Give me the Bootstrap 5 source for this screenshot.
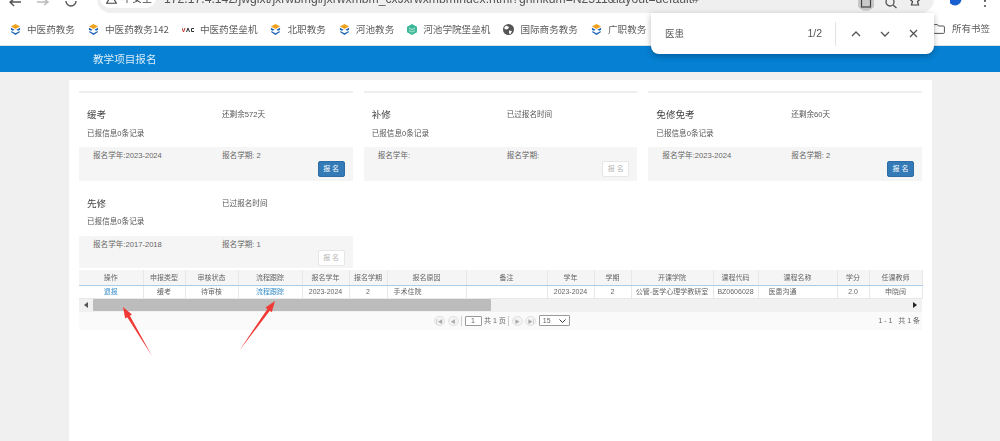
<!DOCTYPE html>
<html lang="zh">
<head>
<meta charset="utf-8">
<title>教学项目报名</title>
<link rel="stylesheet" href="https://cdn.jsdelivr.net/npm/bootstrap@5.3.0/dist/css/bootstrap.min.css">
<style>
html,body{height:441px;overflow:hidden}
body{background:#f0f0f0;font-family:"Liberation Sans","Noto Sans CJK SC",sans-serif;color:#555;position:relative;font-size:8px;line-height:1;filter:blur(.35px)}
.toolbar{height:13px;background:#fff;overflow:hidden}
.navico{width:97px;padding-left:9px;gap:16px;height:13px}
.addr{width:837px;height:26px;background:#efefef;border-radius:0 0 14px 14px;margin-top:-13px;flex:none}
.unsafe{background:#fff;width:56px;height:21px;border-radius:11px;margin:0 8px 0 3px;font-size:10px;line-height:1;color:#444;padding-top:7px;padding-left:6px;flex:none;gap:5px}
.urltext{font-size:12.2px;line-height:1;color:#555;padding-top:6px;white-space:nowrap;flex:1;overflow:hidden}
.addrico{gap:11px;flex:none;padding:4px 13px 0 0}
.marks{height:33px;background:#fff;border-bottom:1px solid #dfe3e6;padding:1px 0 0 10px;font:9.6px/1 "Noto Sans CJK SC",sans-serif;color:#5c5c5c}
.mark-item{gap:6px;flex:none;margin-right:13px;white-space:nowrap}
.allmarks{position:absolute;left:933px;top:24px;gap:7px;font:9.5px/1 "Noto Sans CJK SC",sans-serif;color:#5c5c5c;white-space:nowrap}
.topbar{height:26px;background:#0580d2;padding-left:93px;color:#d9ecf9;font:10.6px/1 "Noto Sans CJK SC",sans-serif}
.sheet{width:863px;margin:8px 0 0 69px;height:361px;background:#fff;padding:11px 10px 0}
.cardgrid{grid-template-columns:repeat(3,1fr);gap:0 11px}
.tile{border-top:2px solid #eee}
.tile-head{padding:17px 8px 0 8px;height:54px}
.tile-head .nm{font:9.6px/1 "Noto Sans CJK SC",sans-serif;color:#444;width:135px}
.tile-head .left{font:7.6px/1 "Liberation Sans","Noto Sans CJK SC",sans-serif;color:#555}
.tile-sub{font:7.6px/1 "Liberation Sans","Noto Sans CJK SC",sans-serif;color:#555;margin-top:10px}
.tile-foot{height:34px;background:#f5f5f5;padding:5px 8px 0 14px;font:7.6px/1 "Liberation Sans","Noto Sans CJK SC",sans-serif;color:#666;position:relative}
.tile-foot .y{width:129px}
.actbtn{position:absolute;right:8px;top:14px;width:27px;height:16px;padding:0;border-radius:2px;font-size:7px;line-height:14px;--bs-btn-font-size:7px}
.btn-on{background:#337ab7;border:1px solid #2e6da4;color:#fff}
.btn-off{background:#fff;border:1px solid #e6e6e6;color:#b5b5b5}
.tile-low{border-top:0}
.tile-low .tile-head{padding-top:18px;height:55px}
.tile-low .tile-sub{margin-top:9px}
.tile-low .tile-foot{height:32px}
.gridwrap{margin-top:2px;width:843px;font:7px/1 "Liberation Sans","Noto Sans CJK SC",sans-serif}
.gridtbl{table-layout:fixed;width:843px;margin:0;border-collapse:collapse;--bs-table-bg:transparent;font-size:7px;line-height:1;color:#666}
.gridtbl th,.gridtbl td{padding:0;text-align:center;font-weight:400;border:0;border-right:1px solid #e8e8e8;white-space:nowrap;overflow:hidden;vertical-align:middle}
.gridtbl th{height:15px;background:#f5f5f5;color:#666;border-bottom:1px solid #a9cdea}
.gridtbl td{height:13px;background:#fff;border-bottom:1px solid #e8e8e8}
.gridtbl .lft{text-align:left;padding-left:6px}
.gridtbl .lft-wide{padding-left:10px}
.gridtbl a{color:#3a8fc9;text-decoration:none}
.hscroll{height:13px;background:#f1f1f1}
.hscroll .thumb{width:398px;height:12px;background:#bcbcbc}
.arr{width:14px;height:13px;flex:none}
.pager{height:18px;background:#fafafa;padding-right:2px;color:#666;font:7px/1 "Liberation Sans","Noto Sans CJK SC",sans-serif}
.pager-mid{margin-left:355px;gap:2.500px}
.pgb{width:11px;height:10px;border:1px solid #e3e3e3;border-radius:5px;color:#aaa;font-size:5px;line-height:8px;text-align:center;background:#f3f3f3}
.pgsep{width:1px;height:10px;background:#ccc}
.pginp{width:17px;height:10px;border:1px solid #999;background:#fff;text-align:center;line-height:8px;border-radius:1px}
.pgsel{width:31px;height:11px;border:1px solid #999;background:#fff;border-radius:1px;padding:0 3px}
.findbar{position:absolute;left:651px;top:13px;width:283px;height:41px;background:#fff;border-radius:0 0 8px 8px;box-shadow:0 2px 6px rgba(0,0,0,.28);padding:0 16px 0 14px;font:9.5px/1 "Noto Sans CJK SC",sans-serif;color:#555}
.findbar .cnt{font:10.5px/1 "Liberation Sans",sans-serif;margin-left:auto;margin-right:13px}
.findbar .sep{width:1px;height:24px;background:#e2e2e2;margin-right:15px}
.findbar .ctl{gap:19px}
.arrows{position:absolute;left:0;top:0;pointer-events:none}
</style>
</head>
<body>
<svg width="0" height="0" class="position-absolute">
  <defs>
    <symbol id="cube" viewBox="0 0 12 12">
      <path d="M6 0 11 2.600 6 5.400 1 2.600z" fill="#f0a21e"/>
      <path d="M1 4.200 5 6.400 3.200 7.400 1 6.200zM11 4.200 7 6.400 8.800 7.400 11 6.200z" fill="#1b62b8"/>
      <path d="M1.400 7.600 6 10 10.600 7.600 10.600 9 6 12 1.400 9z" fill="#1b62b8"/>
    </symbol>
  </defs>
</svg>

<div class="toolbar d-flex align-items-start">
  <div class="navico d-flex align-items-start">
    <svg width="12" height="8" viewBox="0 0 12 8"><path d="M12 1H2M5 -2 1 1l4 4" transform="translate(0 1)" fill="none" stroke="#555" stroke-width="1.400"/></svg>
    <svg width="12" height="8" viewBox="0 0 12 8"><path d="M0 2h10M7 -1l4 3-4 3" fill="none" stroke="#bbb" stroke-width="1.400"/></svg>
    <svg width="12" height="8" viewBox="0 0 12 8"><path d="M11 0A5 5 0 0 1 1 0" fill="none" stroke="#555" stroke-width="1.400" transform="translate(0 1)"/></svg>
  </div>
  <div class="addr d-flex">
    <div class="unsafe d-flex align-items-start"><svg class="flex-none" width="11" height="10" viewBox="0 0 11 10"><path d="M5.500 .8 10.300 9.200H.7z" fill="none" stroke="#444" stroke-width="1.100"/></svg><span>不安全</span></div>
    <div class="urltext">172.17.4.142/jwglxt/jxrwbmgl/jxrwxmbm_cxJxrwxmbmIndex.html?gnmkdm=N2511&amp;layout=default#</div>
    <div class="addrico d-flex align-items-start">
      <svg width="16" height="20" viewBox="0 0 16 20"><circle cx="8" cy="11" r="9" fill="#c9c9c9"/><rect x="3.500" y="7" width="9" height="9" fill="none" stroke="#444" stroke-width="1.200"/></svg>
      <svg width="13" height="20" viewBox="0 0 13 20"><circle cx="5" cy="11" r="4" fill="none" stroke="#555" stroke-width="1.300"/><path d="M8 14l3.500 3" stroke="#555" stroke-width="1.400"/></svg>
      <svg width="12" height="20" viewBox="0 0 12 20"><path d="M6 10 7.500 13.500 11.500 14 8.500 16.500 9.500 20H2.500L3.500 16.500.5 14l4-.5z" transform="translate(0 -6)" fill="none" stroke="#444" stroke-width="1.200"/></svg>
    </div>
  </div>
  <svg class="ms-3 flex-none" width="14" height="12" viewBox="0 0 14 12"><circle cx="5" cy="-1" r="6.500" fill="#1a5fd0"/></svg>
  <svg class="flex-none" style="margin-left:19px" width="4" height="13" viewBox="0 0 4 13"><circle cx="2" cy="1" r="1.100" fill="#555"/><circle cx="2" cy="6" r="1.100" fill="#555"/></svg>
</div>

<div class="marks d-flex align-items-center">
  <div class="mark-item d-flex align-items-center"><svg width="11" height="11"><use href="#cube"/></svg>中医药教务</div>
  <div class="mark-item d-flex align-items-center"><svg width="11" height="11"><use href="#cube"/></svg>中医药教务142</div>
  <div class="mark-item d-flex align-items-center"><svg width="12" height="6" viewBox="0 0 12 6"><path d="M0 1 1.500 5 3 1" fill="none" stroke="#c0392b" stroke-width="1"/><path d="M4.500 5 6 1 7.500 5" fill="none" stroke="#333" stroke-width="1"/><path d="M12 1.500H9.500V4.500H12" fill="none" stroke="#333" stroke-width="1"/></svg>中医药堡垒机</div>
  <div class="mark-item d-flex align-items-center"><svg width="11" height="11"><use href="#cube"/></svg>北职教务</div>
  <div class="mark-item d-flex align-items-center"><svg width="11" height="11"><use href="#cube"/></svg>河池教务</div>
  <div class="mark-item d-flex align-items-center"><svg width="10" height="11" viewBox="0 0 10 11"><path d="M5 0 10 2.700V8.300L5 11 0 8.300V2.700z" fill="#3fb89a"/><path d="M2 4l3 1.600L8 4M2 6.500l3 1.600 3-1.600" fill="none" stroke="#d6f3ea" stroke-width=".8"/></svg>河池学院堡垒机</div>
  <div class="mark-item d-flex align-items-center"><svg width="11" height="11" viewBox="0 0 11 11"><circle cx="5.500" cy="5.500" r="5.500" fill="#555"/><path d="M3 1.500 6 3 5 5 2.500 5.500 1 4zM6 6.500l3 .5-1.500 3-1.500-.5z" fill="#fff"/></svg>国际商务教务</div>
  <div class="mark-item d-flex align-items-center"><svg width="11" height="11"><use href="#cube"/></svg>广职教务</div>
</div>
<div class="allmarks d-flex align-items-center"><svg width="12" height="10" viewBox="0 0 12 10"><path d="M.6 1.500A1 1 0 0 1 1.500.6H4.500L5.500 2H10.500A1 1 0 0 1 11.400 3V8.500A1 1 0 0 1 10.500 9.400H1.500A1 1 0 0 1 .6 8.500z" fill="none" stroke="#555" stroke-width="1"/></svg>所有书签</div>

<div class="topbar d-flex align-items-center">教学项目报名</div>

<main class="sheet">
  <div class="cardgrid d-grid">
    <section class="tile">
      <div class="tile-head"><div class="d-flex align-items-center"><div class="nm">缓考</div><div class="left">还剩余572天</div></div><div class="tile-sub">已报信息0条记录</div></div>
      <div class="tile-foot d-flex"><div class="y">报名学年:2023-2024</div><div>报名学期: 2</div><button class="btn actbtn btn-on" type="button">报 名</button></div>
    </section>
    <section class="tile">
      <div class="tile-head"><div class="d-flex align-items-center"><div class="nm">补修</div><div class="left">已过报名时间</div></div><div class="tile-sub">已报信息0条记录</div></div>
      <div class="tile-foot d-flex"><div class="y">报名学年:</div><div>报名学期:</div><button class="btn actbtn btn-off" type="button">报 名</button></div>
    </section>
    <section class="tile">
      <div class="tile-head"><div class="d-flex align-items-center"><div class="nm">免修免考</div><div class="left">还剩余60天</div></div><div class="tile-sub">已报信息0条记录</div></div>
      <div class="tile-foot d-flex"><div class="y">报名学年:2023-2024</div><div>报名学期: 2</div><button class="btn actbtn btn-on" type="button">报 名</button></div>
    </section>
    <section class="tile tile-low">
      <div class="tile-head"><div class="d-flex align-items-center"><div class="nm">先修</div><div class="left">已过报名时间</div></div><div class="tile-sub">已报信息0条记录</div></div>
      <div class="tile-foot d-flex"><div class="y">报名学年:2017-2018</div><div>报名学期: 1</div><button class="btn actbtn btn-off" type="button">报 名</button></div>
    </section>
  </div>

  <div class="gridwrap">
    <table class="table gridtbl">
      <colgroup>
        <col style="width:64px"><col style="width:42px"><col style="width:53px"><col style="width:64px"><col style="width:47px"><col style="width:38px"><col style="width:79px"><col style="width:81px"><col style="width:47px"><col style="width:37px"><col style="width:82px"><col style="width:45px"><col style="width:79px"><col style="width:32px"><col style="width:53px">
      </colgroup>
      <thead>
        <tr><th>操作</th><th>申报类型</th><th>审核状态</th><th>流程跟踪</th><th>报名学年</th><th>报名学期</th><th>报名原因</th><th>备注</th><th>学年</th><th>学期</th><th>开课学院</th><th>课程代码</th><th>课程名称</th><th>学分</th><th>任课教师</th></tr>
      </thead>
      <tbody>
        <tr><td><a href="#">退报</a></td><td>缓考</td><td>待审核</td><td><a href="#">流程跟踪</a></td><td>2023-2024</td><td>2</td><td class="lft">手术住院</td><td></td><td>2023-2024</td><td>2</td><td>公管-医学心理学教研室</td><td>BZ0606028</td><td class="lft lft-wide">医患沟通</td><td>2.0</td><td>申晓阔</td></tr>
      </tbody>
    </table>
    <div class="hscroll d-flex align-items-center">
      <div class="arr d-flex align-items-center justify-content-center"><svg width="4" height="6" viewBox="0 0 4 6"><path d="M4 0V6L0 3z" fill="#555"/></svg></div>
      <div class="thumb"></div>
      <div class="arr ms-auto d-flex align-items-center justify-content-center"><svg width="4" height="6" viewBox="0 0 4 6"><path d="M0 0V6L4 3z" fill="#222"/></svg></div>
    </div>
    <div class="pager d-flex align-items-center">
      <div class="pager-mid d-flex align-items-center">
        <span class="pgb">|◀</span><span class="pgb">◀</span><span class="pgsep"></span>
        <span class="pginp">1</span><span>共 1 页</span><span class="pgsep"></span>
        <span class="pgb">▶</span><span class="pgb">▶|</span>
        <span class="pgsel d-flex align-items-center justify-content-between">15<svg width="7" height="4" viewBox="0 0 7 4"><path d="M.5.5 3.500 3.500 6.500.5" fill="none" stroke="#333"/></svg></span>
      </div>
      <div class="ms-auto">1 - 1&nbsp;&nbsp;&nbsp;共 1 条</div>
    </div>
  </div>
</main>

<div class="findbar d-flex align-items-center">
  <span>医患</span>
  <span class="cnt">1/2</span>
  <span class="sep"></span>
  <span class="ctl d-flex align-items-center">
    <svg width="10" height="6" viewBox="0 0 10 6"><path d="M1 5 5 1l4 4" fill="none" stroke="#555" stroke-width="1.300"/></svg>
    <svg width="10" height="6" viewBox="0 0 10 6"><path d="M1 1l4 4 4-4" fill="none" stroke="#555" stroke-width="1.300"/></svg>
    <svg width="9" height="9" viewBox="0 0 9 9"><path d="M1 1l7 7M8 1 1 8" stroke="#555" stroke-width="1.300"/></svg>
  </span>
</div>

<svg class="arrows" width="1000" height="441" viewBox="0 0 1000 441">
  <path d="M152 356 129.900 315.700 132 314.500 123 307 125.200 318.500 127.300 317.300z" fill="#f03a35"/>
  <path d="M239 351 269.800 310.800 271.800 312.200 275 301 265.400 307.600 267.400 309z" fill="#f03a35"/>
</svg>
</body>
</html>
